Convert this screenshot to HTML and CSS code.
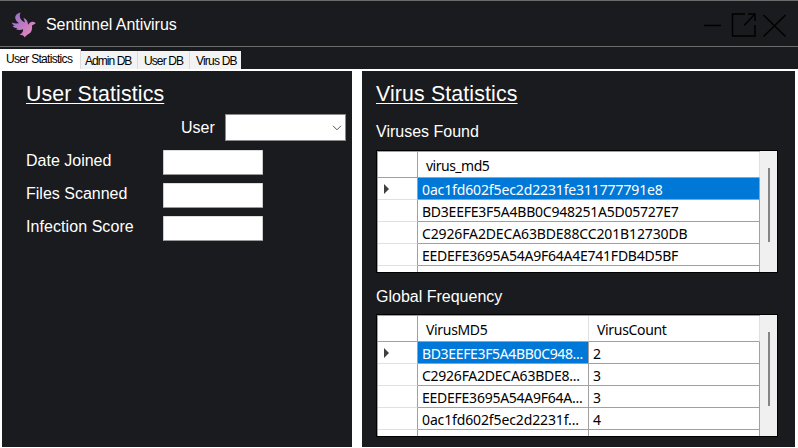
FILE: index.html
```html
<!DOCTYPE html>
<html lang="en">
<head>
<meta charset="utf-8">
<title>Sentinnel Antivirus</title>
<link rel="stylesheet" href="styles.css">
</head>
<body>
<header class="titlebar">
  <svg class="logo" width="26" height="26" viewBox="0 0 26 26">
    <defs><linearGradient id="bird" x1="0" y1="0" x2="1" y2="1"><stop offset="0" stop-color="#8a70cc"/><stop offset=".45" stop-color="#bd78c6"/><stop offset="1" stop-color="#ee8fb4"/></linearGradient></defs>
    <path fill="url(#bird)" d="M9.500.5C5.500 1.500 3.500 4 4.500 7 5 9 6.500 10 8 11.300 5 11.600 3 11.400.8 10.500 1.500 12.300 2.500 13.300 4 13.800L1.500 14C3 15.600 4.500 16.200 6.500 16L5 17.300C7.500 18.300 10 18 12 17.300 12.500 19.500 11 21.500 8.500 22.800 11 23 12.500 23 13.800 25.500 14.800 24 16 22.700 18 21.800 20.500 20.300 21.500 17.500 21 13.500L24.800 11.200C23 9.500 20.500 9.300 18.500 11L17 12.800C17 9.500 15.500 7 12.500 5.800L14 10.500C10 9 7.500 5 9.500.5Z"/>
  </svg>
  <span class="app-name">Sentinnel Antivirus</span>
  <svg class="controls" width="84" height="28" viewBox="0 0 84 28" fill="none" stroke="#000" stroke-width="1.500">
    <path d="M1 13.500h17M42 2H29.500v22h22.500V13M45 2h7v7M52 2 41 13.500M60.500 3l22 21.500M82.500 3l-22 21.500"/>
  </svg>
</header>
<nav class="tabs">
  <span class="tab active">User Statistics</span>
  <span class="tab admin">Admin DB</span>
  <span class="tab user">User DB</span>
  <span class="tab virus">Virus DB</span>
</nav>
<main class="page">
  <section class="panel left">
    <h1 class="user-title">User Statistics</h1>
    <div class="picker"><span class="user-label">User</span>
      <div class="combo"><svg width="10" height="6" viewBox="0 0 10 6"><path d="M1 .8 5 4.800 9 .8" fill="none" stroke="#555"/></svg></div>
    </div>
    <div class="field"><span class="date">Date Joined</span><div class="box"></div></div>
    <div class="field"><span class="files">Files Scanned</span><div class="box"></div></div>
    <div class="field"><span class="score">Infection Score</span><div class="box"></div></div>
  </section>
  <section class="panel right">
    <h1 class="virus-title">Virus Statistics</h1>
    <h2 class="found">Viruses Found</h2>
    <div class="grid">
      <div class="rows">
        <div class="row head"><i class="rh"></i><span class="cell">virus_md5</span></div>
        <div class="row light"><i class="rh current"></i><span class="cell selected">0ac1fd602f5ec2d2231fe311777791e8</span></div>
        <div class="row"><i class="rh"></i><span class="cell">BD3EEFE3F5A4BB0C948251A5D05727E7</span></div>
        <div class="row light"><i class="rh"></i><span class="cell">C2926FA2DECA63BDE88CC201B12730DB</span></div>
        <div class="row"><i class="rh"></i><span class="cell">EEDEFE3695A54A9F64A4E741FDB4D5BF</span></div>
        <div class="row"><i class="rh"></i><span class="cell"></span></div>
      </div>
      <div class="scroll"><div class="thumb"></div></div>
    </div>
    <h2 class="frequency">Global Frequency</h2>
    <div class="grid two">
      <div class="rows">
        <div class="row head"><i class="rh"></i><span class="cell">VirusMD5</span><span class="cell">VirusCount</span></div>
        <div class="row"><i class="rh current"></i><span class="cell selected">BD3EEFE3F5A4BB0C948...</span><span class="cell">2</span></div>
        <div class="row loose"><i class="rh"></i><span class="cell">C2926FA2DECA63BDE8...</span><span class="cell">3</span></div>
        <div class="row loose"><i class="rh"></i><span class="cell">EEDEFE3695A54A9F64A...</span><span class="cell">3</span></div>
        <div class="row light"><i class="rh"></i><span class="cell">0ac1fd602f5ec2d2231f...</span><span class="cell">4</span></div>
        <div class="row"><i class="rh"></i><span class="cell"></span><span class="cell"></span></div>
      </div>
      <div class="scroll"><div class="thumb"></div></div>
    </div>
  </section>
</main>
</body>
</html>
```
FILE: styles.css
```css
* { box-sizing: border-box; }
body { margin: 0; width: 798px; height: 448px; overflow: hidden; background: #1a1b1e; color: #fff; font: 16px/20px "Liberation Sans", sans-serif; }
h1, h2 { margin: 0; font-weight: 400; white-space: nowrap; }
span { white-space: nowrap; }
.titlebar { height: 47px; border-top: 1px solid #6b6b6b; border-bottom: 1px solid #6b6b6b; display: flex; align-items: center; padding: 2px 11px 0 11px; }
.app-name { margin-left: 9px; letter-spacing: -0.05px; }
.controls { margin: 2px 0 0 auto; }
.tabs { height: 22px; display: flex; align-items: flex-end; color: #000; font-size: 12px; line-height: 20px; letter-spacing: -0.7px; }
.tab { height: 18px; background: #f3f3f3; border-right: 1px solid #dcdcdc; padding-left: 4px; }
.tab.active { height: 20px; width: 81px; background: #fff; padding-left: 6px; }
.admin { width: 57px; letter-spacing: -0.95px; }
.user { width: 52px; padding-left: 6px; letter-spacing: -0.9px; }
.virus { width: 51px; padding-left: 6px; border: 0; letter-spacing: -0.8px; }
.page { height: 379px; background: #fff; padding: 2px 3px 1px 2px; display: flex; gap: 10px; }
.panel { background: #1a1b1e; }
.left { width: 350px; padding: 11px 0 0 24px; }
.right { width: 433px; padding: 11px 0 0 14px; }
h1 { font-size: 21.333px; letter-spacing: 0.13px; line-height: 24px; height: 24px; text-decoration: underline; text-decoration-thickness: 1px; text-underline-offset: 2px; }
h2 { font-size: 16px; line-height: 22px; height: 20px; }
.picker { display: flex; align-items: center; margin: 8px 0 9px 155px; height: 27px; }
.user-label { width: 44px; }
.combo { width: 121px; height: 27px; background: #fff; border: 1px solid #8a8a8a; display: flex; align-items: center; justify-content: flex-end; padding: 1px 3px 0 0; }
.field { display: flex; height: 25px; margin-bottom: 8px; line-height: 21px; }
.field span { width: 137px; }
.score { letter-spacing: 0.07px; }
.box { width: 100px; height: 25px; background: #fff; border: 1px solid #999; border-color: #ddd #ccc #999; border-radius: 1px; }
.found { margin: 15px 0 9px; }
.frequency { margin: 13px 0 8px; }
.grid { width: 402px; height: 123px; border: 1px solid #000; background: #fff; display: flex; color: #000; font: 14px/23px "Noto Sans", sans-serif; letter-spacing: -0.24px; overflow: hidden; }
.two { letter-spacing: -0.35px; }
.light { letter-spacing: -0.13px; }
.loose { letter-spacing: -0.25px; }
.rows { width: 383px; height: 121px; overflow: hidden; border: solid #a0a0a0; border-width: 1px 0 0 1px; }
.row { height: 22px; display: flex; }
.head { height: 26px; line-height: 27px; letter-spacing: -0.5px; }
.two .head { letter-spacing: -0.33px; }
.rh { width: 40px; flex: none; border-right: 1px solid #a0a0a0; border-bottom: 1px solid #e0e0e0; display: flex; align-items: center; padding-left: 6px; }
.head .rh { border-bottom-color: #a0a0a0; }
.current::before { content: ""; border: solid transparent; border-width: 5px 0 5px 5px; border-left-color: #404040; }
.cell { flex: 1; min-width: 0; border-right: 1px solid #a0a0a0; border-bottom: 1px solid #a0a0a0; padding-left: 4px; }
.two .cell:nth-child(3) { flex: 0 0 171px; }
.head .cell { padding-left: 8px; border-right-color: #e0e0e0; }
.selected { background: #0078d7; color: #fff; }
.scroll { width: 17px; background: #f0f0f0; padding: 17px 0 0 8px; }
.thumb { width: 2px; height: 74px; background: #858585; }
```
